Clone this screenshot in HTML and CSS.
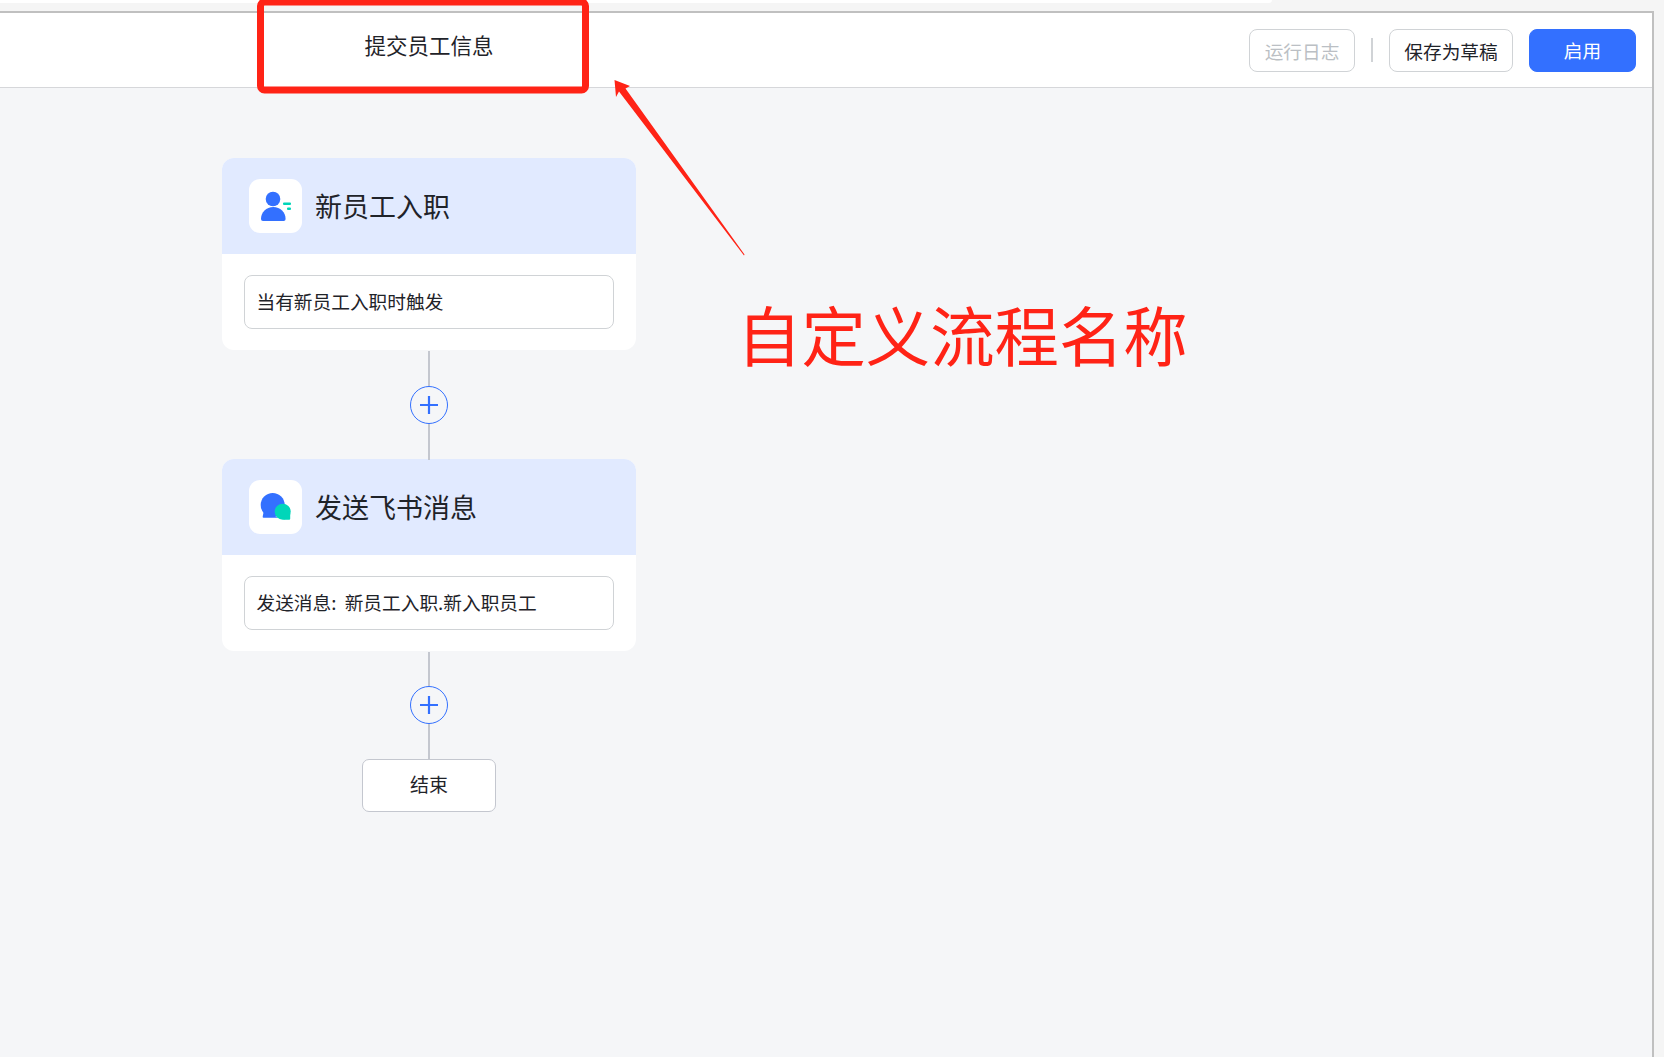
FILE: index.html
```html
<!DOCTYPE html>
<html lang="zh-CN">
<head>
<meta charset="utf-8">
<title>提交员工信息</title>
<link rel="stylesheet" href="styles.css">
</head>
<body>
<div class="topbar"><div class="tab-edge"></div></div>
<div class="frame">
  <header class="header">
    <div class="flow-title">提交员工信息</div>
    <div class="actions">
      <button class="btn btn-log">运行日志</button>
      <span class="sep"></span>
      <button class="btn btn-save">保存为草稿</button>
      <button class="btn btn-primary">启用</button>
    </div>
  </header>
  <main class="canvas">
    <div class="flow">
      <section class="card">
        <div class="card-head">
          <span class="icon-box">
            <svg class="icon" width="53" height="54" viewBox="0 0 53 54">
              <circle cx="24" cy="20" r="7.300" fill="#3370ff"/>
              <path d="M12 40c0-7 5.300-12 12.300-12s12.300 5 12.300 12a2 2 0 0 1-2 2H14a2 2 0 0 1-2-2z" fill="#3370ff"/>
              <rect x="34" y="23.500" width="8" height="2.500" rx="1" fill="#00d6b9"/>
              <rect x="38" y="28.500" width="4" height="2.500" rx="1" fill="#00d6b9"/>
            </svg>
          </span>
          <h2 class="card-title">新员工入职</h2>
        </div>
        <div class="card-body"><div class="field">当有新员工入职时触发</div></div>
      </section>
      <div class="link link-long"><span class="add"><svg width="20" height="20" viewBox="0 0 20 20"><path d="M10 1v18M1 10h18" stroke="#3370ff" stroke-width="2.200" fill="none"/></svg></span></div>
      <section class="card">
        <div class="card-head">
          <span class="icon-box">
            <svg class="icon" width="53" height="54" viewBox="0 0 53 54">
              <circle cx="23.700" cy="25" r="12" fill="#3370ff"/>
              <path d="M15 30l-1.300 6.500a1 1 0 0 0 1 1.200H29z" fill="#3370ff"/>
              <circle cx="33.700" cy="31.700" r="8" fill="#00d6b9"/>
              <rect x="34" y="32" width="7.200" height="7.700" rx="1" fill="#00d6b9"/>
            </svg>
          </span>
          <h2 class="card-title">发送飞书消息</h2>
        </div>
        <div class="card-body"><div class="field">发送消息: 新员工入职.新入职员工</div></div>
      </section>
      <div class="link"><span class="add add-high"><svg width="20" height="20" viewBox="0 0 20 20"><path d="M10 1v18M1 10h18" stroke="#3370ff" stroke-width="2.200" fill="none"/></svg></span></div>
      <div class="end">结束</div>
    </div>
  </main>
</div>
<div class="markup">
  <svg class="markup-svg" width="1664" height="1057" viewBox="0 0 1664 1057">
    <rect x="260.500" y="2" width="325" height="88" rx="4" fill="none" stroke="#ff2316" stroke-width="7"/>
    <path d="M614.500 80 630 86 625.500 88.500 744.500 254.500 744 255.500 619 91.500 616 97z" fill="#ff2316"/>
  </svg>
  <div class="markup-text">自定义流程名称</div>
</div>
</body>
</html>
```
FILE: styles.css
```css
* { box-sizing: border-box; }
html, body { margin: 0; padding: 0; height: 100%; }
body {
  background: #f5f5f5;
  font-family: "Noto Sans CJK SC", "Noto Sans", sans-serif;
  color: #1f2329;
  overflow: hidden;
  display: flex;
  flex-direction: column;
  position: relative;
}
.topbar { height: 11px; flex: none; background: #f5f5f5; }
.tab-edge { width: 1272px; height: 3px; background: #fff; border-bottom-right-radius: 12px; }
.frame {
  flex: 1;
  margin-right: 10px;
  border-top: 2px solid #c0c0c0;
  border-right: 2px solid #c0c0c0;
  display: flex;
  flex-direction: column;
  min-height: 0;
}
.header {
  height: 75px;
  flex: none;
  background: #fff;
  border-bottom: 1px solid #d6d7da;
  display: flex;
  align-items: center;
  justify-content: space-between;
  padding: 0 16px 0 222px;
}
.flow-title {
  width: 414px;
  text-align: center;
  font-size: 21.500px;
  line-height: 30px;
  margin-bottom: 10px;
}
.actions { display: flex; align-items: center; gap: 16px; }
.btn {
  height: 43px;
  border: 1px solid #d0d3d6;
  border-radius: 8px;
  background: #fff;
  font: inherit;
  font-size: 18.670px;
  color: #1f2329;
  padding: 0;
}
.btn-log { width: 106px; color: #bbbfc4; }
.btn-save { width: 124px; }
.btn-primary { width: 107px; background: #3370ff; border-color: #3370ff; color: #fff; padding-bottom: 1px; }
.sep { width: 2px; height: 24px; background: #d0d3d6; }
.canvas { flex: 1; background: #f5f6f8; padding: 70px 0 0 222px; }
.flow { width: 414px; display: flex; flex-direction: column; align-items: center; }
.card {
  width: 100%;
  height: 192px;
  background: #fff;
  border-radius: 12px;
  overflow: hidden;
}
.card-head {
  height: 96px;
  background: #e1eaff;
  display: flex;
  align-items: center;
  gap: 13px;
  padding-left: 27px;
}
.icon-box {
  width: 53px;
  height: 54px;
  background: #fff;
  border-radius: 11px;
  flex: none;
}
.icon { display: block; }
.card-title { margin: 0; font-size: 27px; font-weight: 400; line-height: 36px; }
.card-body { padding: 21px 22px; }
.field {
  height: 54px;
  border: 1px solid #d0d3d6;
  border-radius: 8px;
  background: #fff;
  padding-left: 11.500px;
  font-size: 18.700px;
  word-spacing: 4px;
  line-height: 50px;
}
.link {
  width: 2px;
  height: 108px;
  background: #c4c7cf;
  position: relative;
  margin: 1px 0 -1px;
}
.link-long { height: 109px; }
.add {
  position: absolute;
  left: -18px;
  top: 35px;
  width: 38px;
  height: 38px;
  border: 1px solid #3370ff;
  border-radius: 50%;
  background: #f5f6f8;
  display: flex;
  align-items: center;
  justify-content: center;
}
.add-high { top: 34px; }
.end {
  width: 134px;
  height: 53px;
  border: 1px solid #c4c7cf;
  border-radius: 7px;
  background: #fff;
  font-size: 19px;
  line-height: 47px;
  text-align: center;
}
.markup { position: absolute; inset: 0; pointer-events: none; }
.markup-svg { position: absolute; left: 0; top: 0; }
.markup-text {
  position: absolute;
  left: 737px;
  top: 287px;
  font-size: 64.400px;
  line-height: 92px;
  color: #ff2316;
  white-space: nowrap;
}
```
